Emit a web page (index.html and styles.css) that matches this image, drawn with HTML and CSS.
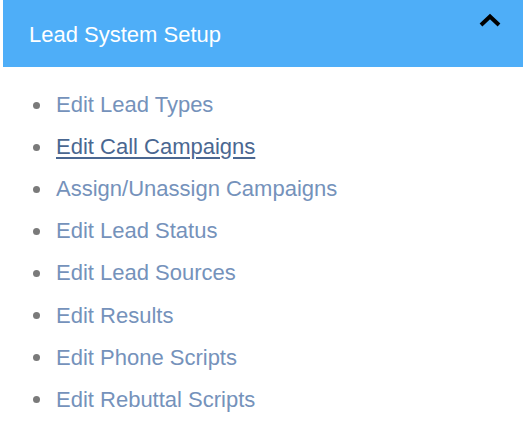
FILE: index.html
```html
<!DOCTYPE html>
<html lang="en">
<head>
  <meta charset="UTF-8" />
  <meta name="viewport" content="width=device-width, initial-scale=1" />
  <title>Lead System Setup</title>
  <link rel="stylesheet" href="styles.css">
</head>
<body>

  <div class="panel">
    <div class="panel-header">
      <h2 class="panel-title">Lead System Setup</h2>
      <svg class="toggle" width="22" height="16" viewBox="0 0 22 16" aria-hidden="true">
        <path d="M2 13 L11 4.5 L20 13" fill="none" stroke="#000" stroke-width="4" />
      </svg>
    </div>

    <ul class="setup-links">
      <li><a href="#">Edit Lead Types</a></li>
      <li><a href="#" class="active">Edit Call Campaigns</a></li>
      <li><a href="#">Assign/Unassign Campaigns</a></li>
      <li><a href="#">Edit Lead Status</a></li>
      <li><a href="#">Edit Lead Sources</a></li>
      <li><a href="#">Edit Results</a></li>
      <li><a href="#">Edit Phone Scripts</a></li>
      <li><a href="#">Edit Rebuttal Scripts</a></li>
    </ul>
  </div>

</body>
</html>
```

FILE: styles.css
```css
:root {
  --header-blue: #4eaef8;
  --link: #7592bb;
  --link-active: #4a6791;
  --bullet: #7a7a7a;
}

body {
  margin: 0;
  font-family: "Liberation Sans", Arial, Helvetica, sans-serif;
  background: #fff;
}

.panel-header {
  display: flex;
  justify-content: space-between;
  align-items: flex-start;
  height: 67px;
  margin: 0 1px 0 3px;
  background: var(--header-blue);
}

.panel-title {
  margin: 0;
  padding: 22px 0 0 26px;
  font-size: 22px;
  font-weight: normal;
  color: #fff;
  line-height: 25px;
}

.toggle {
  margin: 12px 22px 0 0;
}

.setup-links {
  list-style: none;
  margin: 17px 0 0;
  padding: 0 0 0 33px;
}

.setup-links li {
  display: flex;
  align-items: center;
  height: 42.1px;
}

.setup-links li::before {
  content: "";
  width: 7px;
  height: 7px;
  margin-right: 16px;
  border-radius: 50%;
  background: var(--bullet);
}

.setup-links a {
  font-size: 22px;
  color: var(--link);
  text-decoration: none;
}

.setup-links a.active {
  color: var(--link-active);
  text-decoration: underline;
  text-underline-offset: 3px;
}
```
